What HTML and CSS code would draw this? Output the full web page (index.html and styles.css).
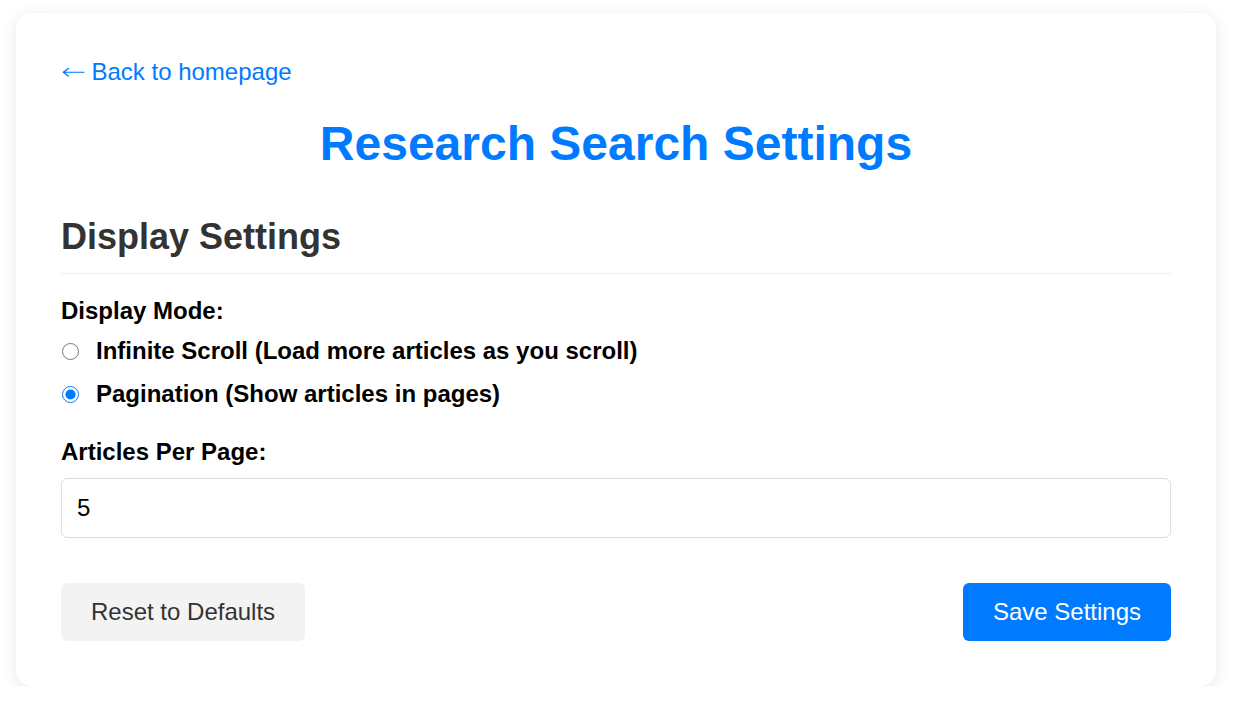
FILE: index.html
```html
<!DOCTYPE html>
<html lang="en">
<head>
<meta charset="utf-8">
<title>Research Search Settings</title>
<link rel="stylesheet" href="styles.css">
</head>
<body>
<div class="card">
  <div class="back-row"><a class="back-link" href="#"><span class="arrow">←</span> Back to homepage</a></div>
  <h1 class="title">Research Search Settings</h1>
  <h2 class="section-title">Display Settings</h2>
  <div class="group">
    <div class="group-label">Display Mode:</div>
    <label class="radio-row"><input type="radio" name="mode" class="radio"> <span>Infinite Scroll (Load more articles as you scroll)</span></label>
    <label class="radio-row"><input type="radio" name="mode" class="radio" checked> <span>Pagination (Show articles in pages)</span></label>
  </div>
  <div class="group group-per-page">
    <label class="group-label" for="per-page">Articles Per Page:</label>
    <input id="per-page" class="text-input" type="number" value="5">
  </div>
  <div class="actions">
    <button class="btn btn-secondary" type="button">Reset to Defaults</button>
    <button class="btn btn-primary" type="button">Save Settings</button>
  </div>
</div>
</body>
</html>
```

FILE: styles.css
```css
html, body {
  margin: 0;
  padding: 0;
  background: #ffffff;
}
body {
  font-family: "Liberation Sans", Arial, sans-serif;
  font-size: 24px;
  color: #000;
  padding: 13px 0 0 16px;
}
.card {
  width: 1200px;
  box-sizing: border-box;
  padding: 45px 45px 45px;
  background: #fff;
  border-radius: 15px;
  box-shadow: 0 3px 15px rgba(0, 0, 0, 0.10);
  display: flex;
  flex-direction: column;
}
.back-row {
  margin-bottom: 31px;
  line-height: 27px;
}
.back-link {
  color: #007bff;
  text-decoration: none;
  font-size: 24px;
}
.arrow {
  font-family: "DejaVu Sans", sans-serif;
  font-size: 26px;
  font-weight: 200;
  display: inline-block;
  transform: scaleX(1.15) scaleY(0.85);
  transform-origin: left center;
  margin-right: 2px;
}
.title {
  margin: 0;
  font-size: 48px;
  font-weight: bold;
  color: #007bff;
  text-align: center;
  line-height: normal;
}
.section-title {
  margin: 45px 0 0 0;
  font-size: 36px;
  font-weight: bold;
  color: #333;
  padding-bottom: 15px;
  border-bottom: 1px solid #eeeeee;
  line-height: normal;
}
.group {
  display: flex;
  flex-direction: column;
  margin-top: 23px;
}
.group-label {
  font-weight: bold;
  font-size: 24px;
  margin-bottom: 12px;
}
.radio-row {
  display: flex;
  align-items: center;
  font-weight: bold;
  margin-bottom: 15px;
  cursor: pointer;
}
.radio {
  width: 17px;
  height: 17px;
  margin: 0 17px 0 1px;
  accent-color: #007bff;
}
.group-per-page {
  margin-top: 15px;
}
.group-per-page .group-label {
  margin-bottom: 12px;
}
.text-input {
  box-sizing: border-box;
  width: 100%;
  height: 60px;
  padding: 0 15px;
  border: 1px solid #dddddd;
  border-radius: 6px;
  font-family: "Liberation Sans", Arial, sans-serif;
  font-size: 24px;
  color: #000;
  -moz-appearance: textfield;
}
.text-input::-webkit-inner-spin-button,
.text-input::-webkit-outer-spin-button {
  -webkit-appearance: none;
  margin: 0;
}
.actions {
  display: flex;
  justify-content: space-between;
  margin-top: 45px;
}
.btn {
  font-family: "Liberation Sans", Arial, sans-serif;
  font-size: 24px;
  line-height: normal;
  padding: 15px 30px;
  border: none;
  border-radius: 6px;
  cursor: pointer;
}
.btn-secondary {
  background: #f3f3f3;
  color: #333;
}
.btn-primary {
  background: #007bff;
  color: #fff;
}
```
